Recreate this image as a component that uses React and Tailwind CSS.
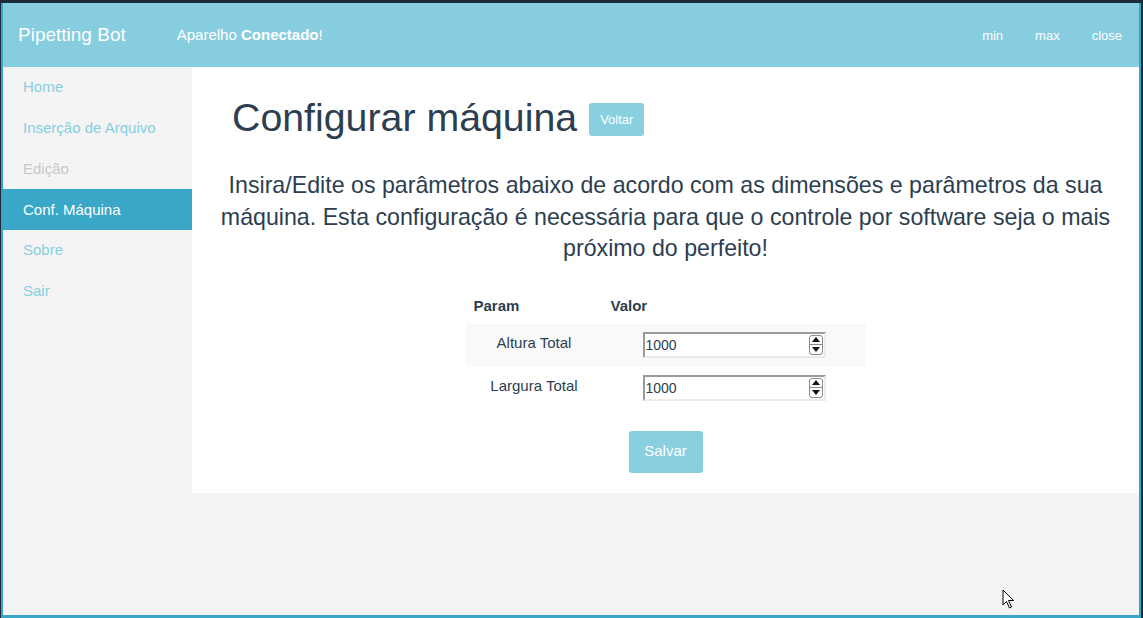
import React from 'react';

const menu = [
  { label: 'Home' },
  { label: 'Inserção de Arquivo' },
  { label: 'Edição', disabled: true },
  { label: 'Conf. Máquina', active: true },
  { label: 'Sobre' },
  { label: 'Sair' },
];

const params = [
  { name: 'Altura Total', value: '1000', striped: true },
  { name: 'Largura Total', value: '1000' },
];

function NumberField({ value }) {
  return (
    <div className="mx-auto flex h-[26px] w-[183px] items-center border-t-2 border-l-2 border-r-2 border-b-2 border-t-[#9a9a9a] border-l-[#9a9a9a] border-r-[#ececec] border-b-[#ececec] bg-white">
      <input
        readOnly
        value={value}
        className="h-full min-w-0 flex-1 bg-transparent pl-[1px] text-[14px] text-[#2c3e50] outline-none"
      />
      <div className="mr-[1px] flex h-[20px] w-[14px] flex-col items-center justify-center rounded-[3px] border border-[#8a8a8a] bg-white">
        <svg width="8" height="5" viewBox="0 0 8 5" className="mb-[2px]">
          <path d="M4 0 L8 5 L0 5 Z" fill="#111" />
        </svg>
        <div className="h-px w-full bg-[#8a8a8a]" />
        <svg width="8" height="5" viewBox="0 0 8 5" className="mt-[2px]">
          <path d="M0 0 L8 0 L4 5 Z" fill="#111" />
        </svg>
      </div>
    </div>
  );
}

export default function App() {
  return (
    <div className="relative h-[618px] w-[1143px] overflow-hidden bg-[#1c2a39] pt-[3px] pl-[1px] pr-[2px] font-['Liberation_Sans',Arial,sans-serif]">
      <div className="flex h-[615px] flex-col border-l-2 border-r-2 border-b-[3px] border-[#38a7c6] bg-[#f4f4f4]">
        {/* navbar */}
        <div className="flex h-[64px] shrink-0 items-center bg-[#86cddf] pt-[1px] text-white">
          <div className="pl-[15px] text-[19px]">Pipetting Bot</div>
          <div className="ml-[51px] text-[15px]">
            Aparelho <b>Conectado</b>!
          </div>
          <div className="ml-auto flex pr-[1px] text-[13px]">
            <span className="px-4">min</span>
            <span className="px-4">max</span>
            <span className="px-4">close</span>
          </div>
        </div>

        <div className="flex flex-1">
          {/* sidebar */}
          <div className="w-[189px] shrink-0 bg-[#f4f4f4]">
            {menu.map((m) => (
              <div
                key={m.label}
                className={
                  'flex h-[40.8px] items-center pl-5 text-[15px] ' +
                  (m.active
                    ? 'bg-[#39a8c8] text-white'
                    : m.disabled
                    ? 'text-[#c8c8c8]'
                    : 'text-[#86cfe0]')
                }
              >
                {m.label}
              </div>
            ))}
          </div>

          {/* main */}
          <div className="flex-1">
            <div className="bg-white pb-[20px] text-[#2c3e50]">
              <div className="flex items-start pt-[29px] pl-[40px]">
                <h1 className="text-[39.3px] leading-[43px]">Configurar máquina</h1>
                <button className="mt-[7px] ml-[12px] rounded-[3px] bg-[#88cfdf] px-[11px] py-[7px] text-[13px] leading-[19px] text-white">
                  Voltar
                </button>
              </div>

              <p className="mt-[31px] px-[24px] text-center text-[23.2px] leading-[31.5px]">
                Insira/Edite os parâmetros abaixo de acordo com as dimensões e parâmetros da sua máquina. Esta
                configuração é necessária para que o controle por software seja o mais próximo do perfeito!
              </p>

              <table className="mx-auto mt-[22px] w-[400px] text-[15px]">
                <thead>
                  <tr>
                    <th className="w-[137px] p-2 text-left font-bold leading-[21px]">Param</th>
                    <th className="p-2 text-left font-bold leading-[21px]">Valor</th>
                  </tr>
                </thead>
                <tbody>
                  {params.map((p) => (
                    <tr key={p.name} className={p.striped ? 'bg-[#f9f9f9]' : ''}>
                      <td className="h-[43px] px-2 pt-2 pb-[9px] text-center align-top leading-[21px]">{p.name}</td>
                      <td className="h-[43px] px-2 pt-2 pb-[9px] align-top">
                        <NumberField value={p.value} />
                      </td>
                    </tr>
                  ))}
                </tbody>
              </table>

              <div className="mt-[21px] flex justify-center">
                <button className="h-[42px] w-[74px] rounded-[3px] bg-[#89cfdf] text-[15px] text-white">Salvar</button>
              </div>
            </div>
          </div>
        </div>
      </div>

      {/* mouse pointer */}
      <svg className="absolute left-[1002px] top-[589px]" width="14" height="21" viewBox="0 0 14 21">
        <path d="M1 1 L1 16 L4.5 12.5 L7.5 19 L9.5 18 L6.5 11.5 L11.5 11.5 Z" fill="#fff" stroke="#000" strokeWidth="1" />
      </svg>
    </div>
  );
}
